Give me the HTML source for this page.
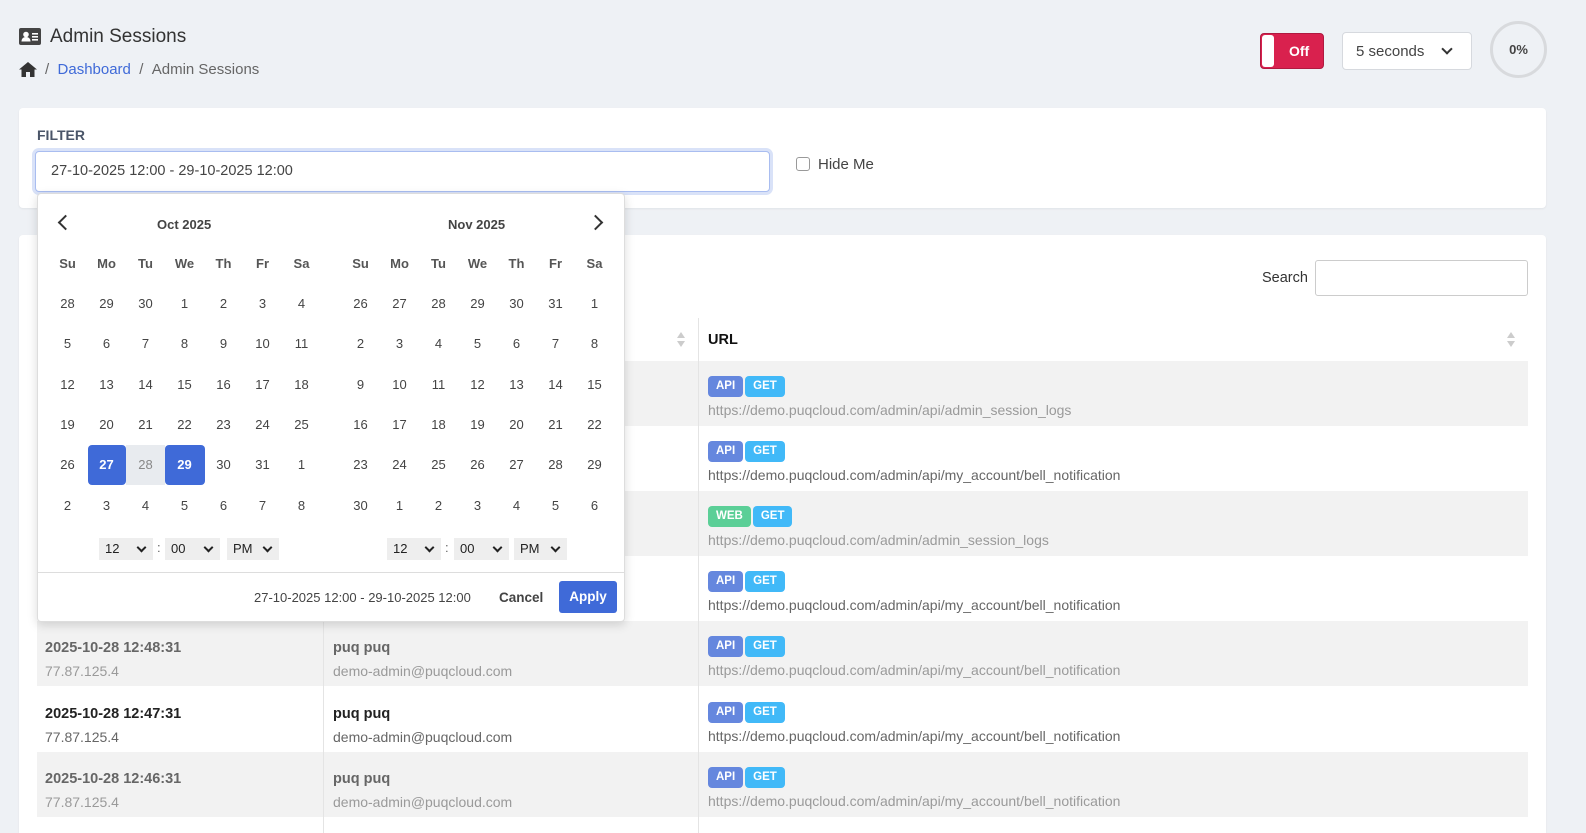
<!DOCTYPE html>
<html><head><meta charset="utf-8"><style>
*{box-sizing:border-box;margin:0;padding:0}
html{overflow:hidden;width:1586px;height:833px}
body{width:1586px;height:833px;overflow:hidden;background:#eef1f5;font-family:"Liberation Sans",sans-serif;color:#333;position:relative}
.a{position:absolute}
.card{position:absolute;background:#fff;border-radius:4px;box-shadow:0 1px 2px rgba(0,0,0,.06)}
.row{position:absolute;left:37px;width:1491px;height:65px}
.row.g{background:#f2f2f2}
.c1,.c2,.c3{position:absolute;top:15px;font-size:14px;line-height:23px}
.c1{left:8px}.c2{left:296px}.c3{left:671px}
.b{font-weight:bold;font-size:14.5px}
.row .b{color:#222}.row .s{color:#666}
.row.dim .b{color:#666}.row.dim .s{color:#9a9a9a}
.badge{display:inline-block;height:21px;line-height:21px;padding:0 8px;border-radius:4px;color:#fff;font-weight:bold;font-size:11.5px;margin-right:2px;vertical-align:top}
.api{background:#6587de}.get{background:#41b9f8}.web{background:#5bcf97}
.vl{position:absolute;top:318px;width:1px;height:515px;background:#e4e4e4}
.cal{position:absolute;left:37px;top:193px;width:588px;height:429px;background:#fff;border:1px solid #ddd;border-radius:4px;box-shadow:0 3px 10px rgba(0,0,0,.15)}
.d{position:absolute;width:39px;height:40px;line-height:40px;text-align:center;font-size:13px;color:#444}
.dn{font-weight:bold;color:#555}
.sel{position:absolute;height:22px;background:#eee;font-size:13px;line-height:22px;padding-left:6px;color:#222}
.sel:after{content:"";position:absolute;right:8px;top:6px;width:5px;height:5px;border-right:2px solid #222;border-bottom:2px solid #222;transform:rotate(45deg)}
</style></head><body>
<svg class="a" style="left:19px;top:28px" width="22" height="17" viewBox="0 0 22 17"><rect x="0" y="0" width="22" height="17" rx="2" fill="#444"/><circle cx="7" cy="6.5" r="2.8" fill="#fff"/><path d="M2.5 13.5c0-3 2-4.5 4.5-4.5s4.5 1.5 4.5 4.5z" fill="#fff"/><rect x="13" y="5" width="6" height="1.6" fill="#fff"/><rect x="13" y="8" width="6" height="1.6" fill="#fff"/><rect x="13" y="11" width="6" height="1.6" fill="#fff"/></svg>
<div class="a" style="left:50px;top:26px;font-size:19px;color:#333">Admin Sessions</div>
<svg class="a" style="left:19px;top:62px" width="18" height="15" viewBox="0 0 18 15"><path d="M9 0L0 7.5h2.5V15h4.5v-5h4v5h4.5V7.5H18z" fill="#333"/></svg>
<div class="a" style="left:45px;top:61px;font-size:15px;color:#666">/&nbsp;&nbsp;<span style="color:#3f6ad8">Dashboard</span>&nbsp;&nbsp;/&nbsp;&nbsp;Admin Sessions</div>
<div class="a" style="left:1260px;top:33px;width:64px;height:36px;background:#d9214e;border-radius:4px;border:1px solid #b01a40"><div class="a" style="left:1px;top:1px;width:12px;height:32px;background:#fff;border-radius:3px"></div><div class="a" style="left:28px;top:9px;color:#fff;font-weight:bold;font-size:14px">Off</div></div>
<div class="a" style="left:1342px;top:32px;width:130px;height:38px;background:#fff;border:1px solid #d6d9de;border-radius:4px;font-size:15px;line-height:38px;padding-left:13px;color:#444">5 seconds<div class="a" style="right:20px;top:12px;width:8px;height:8px;border-right:2px solid #333;border-bottom:2px solid #333;transform:rotate(45deg)"></div></div>
<div class="a" style="left:1490px;top:21px;width:57px;height:57px;border:3px solid #d8dadd;border-radius:50%;text-align:center;line-height:51px;font-size:13px;font-weight:bold;color:#444">0%</div>
<div class="card" style="left:19px;top:108px;width:1527px;height:100px"></div>
<div class="a" style="left:37px;top:127px;font-size:14px;font-weight:bold;color:#4a5568">FILTER</div>
<div class="a" style="left:35px;top:151px;width:735px;height:41px;border:1px solid #a9bdf0;box-shadow:0 0 0 3px #d9e2f8;border-radius:4px;background:#fff;font-size:14.5px;line-height:39px;padding-left:15px;color:#444">27-10-2025 12:00 - 29-10-2025 12:00</div>
<div class="a" style="left:796px;top:157px;width:14px;height:14px;border:1px solid #999;border-radius:3px;background:#fff"></div>
<div class="a" style="left:818px;top:156px;font-size:15px;color:#444">Hide Me</div>
<div class="card" style="left:19px;top:235px;width:1527px;height:598px;border-radius:4px 4px 0 0"></div>
<div class="a" style="left:1262px;top:270px;font-size:14.5px;color:#333">Search</div>
<div class="a" style="left:1315px;top:260px;width:213px;height:36px;border:1px solid #ccc;border-radius:3px;background:#fff"></div>
<div class="a" style="left:708px;top:332px;font-size:14.5px;font-weight:bold;color:#111">URL</div>
<div class="a" style="left:1507px;top:332px;width:0;height:0;border:4px solid transparent;border-bottom:6px solid #ccc;border-top:0"></div>
<div class="a" style="left:1507px;top:341px;width:0;height:0;border:4px solid transparent;border-top:6px solid #ccc;border-bottom:0"></div>
<div class="a" style="left:677px;top:332px;width:0;height:0;border:4px solid transparent;border-bottom:6px solid #ccc;border-top:0"></div>
<div class="a" style="left:677px;top:341px;width:0;height:0;border:4px solid transparent;border-top:6px solid #ccc;border-bottom:0"></div>

<div class="row g dim" style="top:361px"><div class="c3"><span class="badge api">API</span><span class="badge get">GET</span><br><span class="s">https://demo.puqcloud.com/admin/api/admin_session_logs</span></div></div>
<div class="row" style="top:426px"><div class="c3"><span class="badge api">API</span><span class="badge get">GET</span><br><span class="s">https://demo.puqcloud.com/admin/api/my_account/bell_notification</span></div></div>
<div class="row g dim" style="top:491px"><div class="c3"><span class="badge web">WEB</span><span class="badge get">GET</span><br><span class="s">https://demo.puqcloud.com/admin/admin_session_logs</span></div></div>
<div class="row" style="top:556px"><div class="c3"><span class="badge api">API</span><span class="badge get">GET</span><br><span class="s">https://demo.puqcloud.com/admin/api/my_account/bell_notification</span></div></div>
<div class="row g dim" style="top:621px"><div class="c1"><span class="b">2025-10-28 12:48:31</span><br><span class="s">77.87.125.4</span></div><div class="c2"><span class="b">puq puq</span><br><span class="s">demo-admin@puqcloud.com</span></div><div class="c3"><span class="badge api">API</span><span class="badge get">GET</span><br><span class="s">https://demo.puqcloud.com/admin/api/my_account/bell_notification</span></div></div>
<div class="row" style="top:687px"><div class="c1"><span class="b">2025-10-28 12:47:31</span><br><span class="s">77.87.125.4</span></div><div class="c2"><span class="b">puq puq</span><br><span class="s">demo-admin@puqcloud.com</span></div><div class="c3"><span class="badge api">API</span><span class="badge get">GET</span><br><span class="s">https://demo.puqcloud.com/admin/api/my_account/bell_notification</span></div></div>
<div class="row g dim" style="top:752px"><div class="c1"><span class="b">2025-10-28 12:46:31</span><br><span class="s">77.87.125.4</span></div><div class="c2"><span class="b">puq puq</span><br><span class="s">demo-admin@puqcloud.com</span></div><div class="c3"><span class="badge api">API</span><span class="badge get">GET</span><br><span class="s">https://demo.puqcloud.com/admin/api/my_account/bell_notification</span></div></div>
<div class="vl" style="left:323px"></div><div class="vl" style="left:698px"></div>

<div class="cal" id="cal">
<div class="a" style="left:22px;top:23px;width:11px;height:11px;border-left:2px solid #333;border-bottom:2px solid #333;transform:rotate(45deg)"></div>
<div class="a" style="left:552px;top:23px;width:11px;height:11px;border-right:2px solid #333;border-top:2px solid #333;transform:rotate(45deg)"></div>
<div class="a" style="left:119px;top:23px;font-size:13px;font-weight:bold;color:#444">Oct 2025</div>
<div class="a" style="left:410px;top:23px;font-size:13px;font-weight:bold;color:#444">Nov 2025</div>
<div class="a" style="left:50px;top:251px;width:38px;height:40px;background:#3f6ad8;border-radius:4px"></div>
<div class="a" style="left:88px;top:251px;width:39px;height:40px;background:#e8ebef"></div>
<div class="a" style="left:127px;top:251px;width:40px;height:40px;background:#3f6ad8;border-radius:4px"></div>
<div class="sel" style="left:61px;top:344px;width:54px">12</div>
<div class="a" style="left:119px;top:346px;font-size:13px;color:#666">:</div>
<div class="sel" style="left:127px;top:344px;width:55px">00</div>
<div class="sel" style="left:189px;top:344px;width:52px">PM</div>
<div class="sel" style="left:349px;top:344px;width:54px">12</div>
<div class="a" style="left:407px;top:346px;font-size:13px;color:#666">:</div>
<div class="sel" style="left:416px;top:344px;width:55px">00</div>
<div class="sel" style="left:476px;top:344px;width:53px">PM</div>
<div class="a" style="left:0;top:378px;width:586px;height:1px;background:#ddd"></div>
<div class="a" style="left:216px;top:396px;font-size:13px;color:#444">27-10-2025 12:00 - 29-10-2025 12:00</div>
<div class="a" style="left:461px;top:396px;font-size:13.5px;font-weight:bold;color:#444">Cancel</div>
<div class="a" style="left:521px;top:387px;width:58px;height:32px;background:#3f6ad8;border-radius:3px;color:#fff;font-weight:bold;font-size:13.5px;text-align:center;line-height:32px">Apply</div>
</div>
<script>
var c=document.getElementById('cal');
var names=['Su','Mo','Tu','We','Th','Fr','Sa'];
var L=[[28,29,30,1,2,3,4],[5,6,7,8,9,10,11],[12,13,14,15,16,17,18],[19,20,21,22,23,24,25],[26,27,28,29,30,31,1],[2,3,4,5,6,7,8]];
var R=[[26,27,28,29,30,31,1],[2,3,4,5,6,7,8],[9,10,11,12,13,14,15],[16,17,18,19,20,21,22],[23,24,25,26,27,28,29],[30,1,2,3,4,5,6]];
function add(x,y,t,cls,st){var e=document.createElement('div');e.className='d '+(cls||'');e.style.left=x+'px';e.style.top=y+'px';if(st)e.style.cssText+=st;e.textContent=t;c.appendChild(e);}
for(var i=0;i<7;i++){add(10+i*39,50,names[i],'dn');add(303+i*39,50,names[i],'dn');}
for(var r=0;r<6;r++)for(var i=0;i<7;i++){var st='';
if(r==4&&i==1)st='color:#fff;font-weight:bold';if(r==4&&i==3)st='color:#fff;font-weight:bold';if(r==4&&i==2)st='color:#888';
add(10+i*39,90+r*40.3,L[r][i],'',st);add(303+i*39,90+r*40.3,R[r][i]);}
</script>
</body></html>
